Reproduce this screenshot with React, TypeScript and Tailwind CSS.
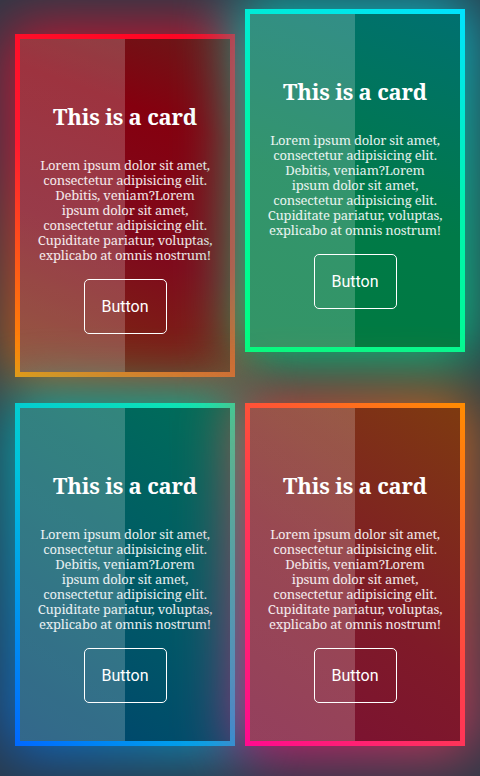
import React from "react";

type CardProps = {
  wrap: string;
  glow: string;
  border: string;
  inner: string;
};

function GlowCard({ wrap, glow, border, inner }: CardProps) {
  return (
    <div className={`relative h-[343px] ${wrap}`}>
      <div className={`absolute -inset-[10px] blur-[30px] opacity-70 ${glow}`} />
      <div className={`relative h-full p-[5px] ${border}`}>
        <div
          className={`h-full flex flex-col items-center text-center text-white pt-[63px] ${inner}`}
        >
          <h2 className="font-['Noto_Serif','DejaVu_Serif',serif] font-bold text-[22px] leading-[28px] tracking-[-0.2px]">
            This is a card
          </h2>
          <p className="mt-[28px] font-['Noto_Serif','DejaVu_Serif',serif] text-[13px] leading-[15px] text-white/90 whitespace-nowrap tracking-[-0.2px]">
            Lorem ipsum dolor sit amet,
            <br />
            consectetur adipisicing elit.
            <br />
            Debitis, veniam?Lorem
            <br />
            ipsum dolor sit amet,
            <br />
            consectetur adipisicing elit.
            <br />
            Cupiditate pariatur, voluptas,
            <br />
            explicabo at omnis nostrum!
          </p>
          <button className="mt-[16px] w-[83px] h-[55px] rounded-[5px] border border-white font-['Roboto',sans-serif] text-[16px] text-white">
            Button
          </button>
        </div>
      </div>
    </div>
  );
}

export default function App() {
  return (
    <div className="min-h-[776px] bg-[#2b3947] overflow-hidden">
      <div className="grid grid-cols-[220px_220px] gap-x-[10px] gap-y-[26px] px-[15px] pt-[9px] pb-[31px] items-start">
        <GlowCard
          wrap="mt-[25px]"
          glow="bg-[linear-gradient(210deg,#ff0020,#ff1030_50%,#ff9000)]"
          border="bg-[linear-gradient(210deg,#ff0020,#ff1a30_50%,#ff9400)]"
          inner="bg-[image:linear-gradient(to_right,rgba(255,255,255,0.2)_50%,transparent_50%),linear-gradient(200deg,#6a1818,#85000f_25%,#7f0a1c_60%,#7a3010)]"
        />
        <GlowCard
          wrap=""
          glow="bg-[linear-gradient(25deg,#00ff80,#00f0b0_50%,#00e0ff)]"
          border="bg-[linear-gradient(25deg,#00ff80,#00f4b0_55%,#00e2ff)]"
          inner="bg-[image:linear-gradient(to_right,rgba(255,255,255,0.2)_50%,transparent_50%),linear-gradient(20deg,#007a40,#007a48_45%,#007070)]"
        />
        <GlowCard
          wrap=""
          glow="bg-[linear-gradient(45deg,#0066ff,#00c8d8_50%,#10f0a0)]"
          border="bg-[linear-gradient(45deg,#0068ff,#00c4dc_50%,#10ecaa)]"
          inner="bg-[image:linear-gradient(to_right,rgba(255,255,255,0.2)_50%,transparent_50%),linear-gradient(35deg,#00426e,#005a66_50%,#006e58)]"
        />
        <GlowCard
          wrap=""
          glow="bg-[linear-gradient(45deg,#ff1090,#ff4050_50%,#ff8800)]"
          border="bg-[linear-gradient(45deg,#ff0a90,#ff4048_50%,#ff8c00)]"
          inner="bg-[image:linear-gradient(to_right,rgba(255,255,255,0.2)_50%,transparent_50%),linear-gradient(35deg,#7a1035,#7f1a28_45%,#7e3a10)]"
        />
      </div>
    </div>
  );
}
